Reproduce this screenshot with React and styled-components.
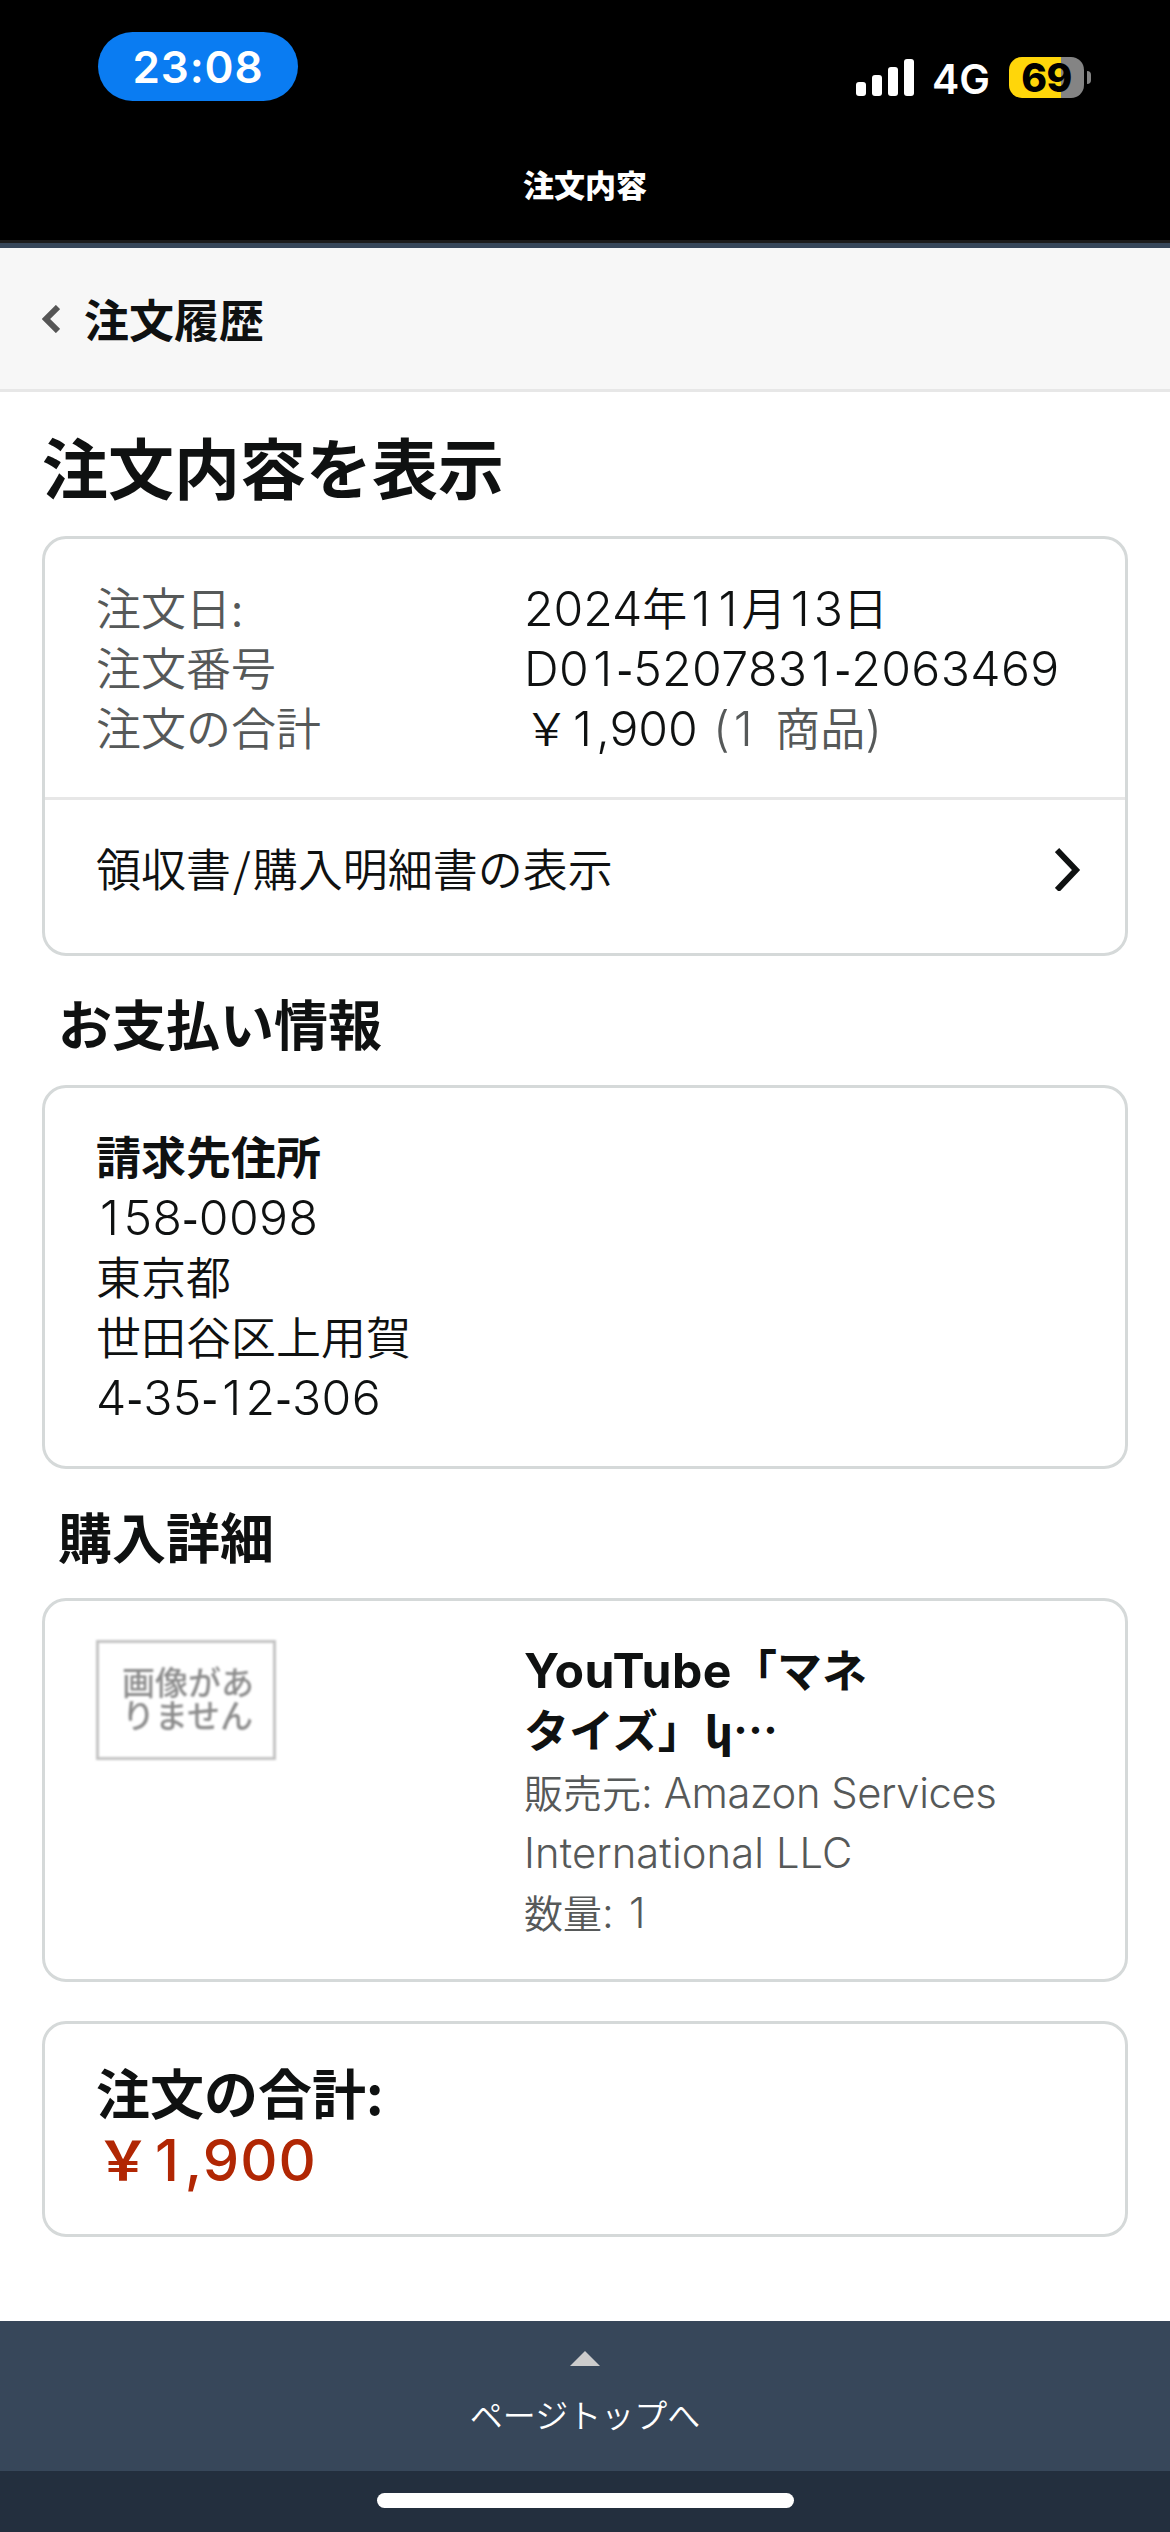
import React from "react";
import styled, { createGlobalStyle } from "styled-components";

const GlobalStyle = createGlobalStyle`
  * {
    box-sizing: border-box;
  }
  body {
    margin: 0;
    background: #fff;
    color: #0f1111;
    font-family: "Noto Sans CJK JP", sans-serif;
    font-size: 45px;
    font-weight: 350;
    line-height: 60px;
    text-size-adjust: none;
  }
`;

const Page = styled.div`
  width: 1170px;
  height: 2532px;
  display: flex;
  flex-direction: column;
  overflow: hidden;
  white-space: nowrap;
`;

const TopArea = styled.header`
  height: 248px;
  flex: none;
  background: #000;
  border-bottom: 5px solid #37475a;
  box-shadow: inset 0 -3px 0 #1c1c1c;
  color: #fff;
`;

const StatusBar = styled.div`
  height: 140px;
  padding: 32px 79px 0 98px;
  display: flex;
  justify-content: space-between;
  font-family: Inter, sans-serif;
`;

const TimePill = styled.div`
  width: 200px;
  height: 69px;
  border-radius: 35px;
  background: #0a7cf2;
  font-size: 44px;
  font-weight: 600;
  line-height: 70px;
  text-align: center;
  letter-spacing: 0.9px;
`;

const StatusIcons = styled.div`
  height: 41px;
  margin-top: 25px;
  display: flex;
  align-items: center;
`;

const Network = styled.span`
  width: 94px;
  margin-top: 3px;
  padding-left: 17px;
  font-size: 41px;
  font-weight: 600;
  line-height: 41px;
`;

const Battery = styled.div`
  width: 75px;
  height: 41px;
  border-radius: 13px;
  background: linear-gradient(90deg, #ffd60a 52px, #848484 52px);
  color: #000;
  font-size: 39px;
  font-weight: 800;
  line-height: 42px;
  text-align: center;
  letter-spacing: -0.5px;
`;

const BatteryTip = styled.div`
  width: 4px;
  height: 13px;
  margin-left: 3px;
  border-radius: 0 4px 4px 0;
  background: #848484;
`;

const ScreenTitle = styled.div`
  height: 90px;
  font-size: 31px;
  font-weight: 900;
  line-height: 87px;
  text-align: center;
`;

const BackBar = styled.nav`
  height: 144px;
  flex: none;
  padding: 1px 42px 0;
  display: flex;
  align-items: center;
  gap: 24px;
  background: #f7f7f7;
  border-bottom: 3px solid #e7e7e7;
  font-weight: 700;
`;

const Content = styled.main`
  flex: 1;
  padding: 0 42px;
`;

const PageTitle = styled.h1`
  margin: 0;
  height: 144px;
  padding-top: 30px;
  font-size: 66px;
  font-weight: 700;
  line-height: 86px;
`;

const SectionTitle = styled.h2`
  margin: 0;
  height: 129px;
  padding: 31px 0 0 16px;
  font-size: 54px;
  font-weight: 700;
  line-height: 72px;
`;

const Card = styled.section`
  height: ${(p) => p.$height}px;
  margin-bottom: ${(p) => p.$gap || 0}px;
  border: 3px solid #d5d9d9;
  border-radius: 24px;
`;

const CardBody = styled.div`
  padding: ${(p) => p.$top}px 51px 40px;
`;

const Columns = styled.div`
  display: grid;
  grid-template-columns: 428px 1fr;
`;

const Muted = styled.span`
  color: #565959;
`;

const ItemCount = styled(Muted)`
  margin-left: 5px;
  word-spacing: 5px;
`;

const LinkRow = styled.a`
  height: 154px;
  padding: 0 44px 16px 51px;
  display: flex;
  align-items: center;
  justify-content: space-between;
  border-top: 3px solid #e7e7e7;
`;

const Slash = styled.span`
  margin: 0 2px;
`;

// digits and latin letters are drawn a little larger than the kana around them
const Latin = styled.span`
  font-family: Inter, sans-serif;
  font-size: 1.07em;
  line-height: 1;
  letter-spacing: ${(p) => p.$track || 0}px;
`;

const Hyphen = styled.span`
  font-family: "Liberation Sans", sans-serif;
`;

const One = styled.span`
  margin: 0 0.085em;
`;

const Bold = styled.div`
  font-weight: 700;
`;

const NoImage = styled.div`
  width: 180px;
  height: 120px;
  padding: 22px 0 0 23px;
  border: 3px solid #c4c4c4;
  color: #8c8c8c;
  font-size: 33px;
  font-weight: 500;
  line-height: 33px;
  filter: blur(0.8px);
`;

const ItemTitle = styled.div`
  margin-top: -1px;
  font-weight: 700;
`;

const Armenian = styled.span`
  margin-left: 2px;
  font-family: "DejaVu Sans", sans-serif;
  font-size: 44px;
  line-height: 1;
`;

const ItemMeta = styled.div`
  padding-top: 2px;
  color: #565959;
  font-size: 39px;
`;

const TotalLabel = styled.div`
  font-size: 54px;
  font-weight: 700;
  line-height: 66px;
`;

const TotalPrice = styled(TotalLabel)`
  color: #b12704;

  ${Latin} {
    font-weight: 550;
  }
`;

const BackToTop = styled.div`
  height: 150px;
  flex: none;
  padding-top: 30px;
  display: flex;
  flex-direction: column;
  align-items: center;
  background: #37475a;
  color: #fff;
  font-size: 33px;
  line-height: 44px;

  svg {
    margin-bottom: 26px;
  }
`;

const HomeArea = styled.footer`
  height: 61px;
  flex: none;
  padding-top: 22px;
  background: #232f3e;
`;

const HomeIndicator = styled.div`
  width: 417px;
  height: 15px;
  margin: 0 auto;
  border-radius: 8px;
  background: #fff;
`;

function SignalIcon() {
  return (
    <svg width="59" height="41" viewBox="0 0 59 41" fill="#fff">
      <rect x="0" y="25" width="10" height="14" rx="3" />
      <rect x="16" y="18" width="10" height="21" rx="3" />
      <rect x="32" y="10" width="10" height="29" rx="3" />
      <rect x="48" y="2" width="10" height="37" rx="3" />
    </svg>
  );
}

function BackIcon() {
  return (
    <svg width="18" height="28" viewBox="0 0 18 28" fill="none" stroke="#555" strokeWidth="6">
      <path d="M16 2 L4 14 L16 26" />
    </svg>
  );
}

function ChevronIcon() {
  return (
    <svg width="26" height="46" viewBox="0 0 26 46" fill="none" stroke="#0f1111" strokeWidth="6">
      <path d="M2 5 L21 25 L2 45" />
    </svg>
  );
}

// "1" and "-" get their own spacing so the figures keep an even pitch
function Digits({ value, track }) {
  return (
    <Latin $track={track}>
      {value.split(/([1-])/).map((part, i) => {
        if (part === "-") return <Hyphen key={i}>-</Hyphen>;
        if (part === "1") return <One key={i}>1</One>;
        return part;
      })}
    </Latin>
  );
}

const orderRows = [
  {
    label: "注文日:",
    value: <><Digits value="2024" />年<Digits value="11" />月<Digits value="13" />日</>,
  },
  { label: "注文番号", value: <Digits value="D01-5207831-2063469" track={0.4} /> },
  {
    label: "注文の合計",
    value: <>￥<Digits value="1,900" /> <ItemCount><Digits value="(1 " />商品<Latin>)</Latin></ItemCount></>,
  },
];

export default function App() {
  return (
    <Page>
      <GlobalStyle />
      <TopArea>
        <StatusBar>
          <TimePill>23:08</TimePill>
          <StatusIcons>
            <SignalIcon />
            <Network>4G</Network>
            <Battery>69</Battery>
            <BatteryTip />
          </StatusIcons>
        </StatusBar>
        <ScreenTitle>注文内容</ScreenTitle>
      </TopArea>

      <BackBar>
        <BackIcon />
        <span>注文履歴</span>
      </BackBar>

      <Content>
        <PageTitle>注文内容を表示</PageTitle>
        <Card $height={420}>
          <CardBody $top={38}>
            {orderRows.map((row) => (
              <Columns key={row.label}>
                <Muted>{row.label}</Muted>
                <div>{row.value}</div>
              </Columns>
            ))}
          </CardBody>
          <LinkRow>
            <span>領収書<Slash>/</Slash>購入明細書の表示</span>
            <ChevronIcon />
          </LinkRow>
        </Card>

        <SectionTitle>お支払い情報</SectionTitle>
        <Card $height={384}>
          <CardBody $top={38}>
            <Bold>請求先住所</Bold>
            <div><Digits value="158-0098" track={0.4} /></div>
            <div>東京都</div>
            <div>世田谷区上用賀</div>
            <div><Digits value="4-35-12-306" track={0.4} /></div>
          </CardBody>
        </Card>

        <SectionTitle>購入詳細</SectionTitle>
        <Card $height={384} $gap={39}>
          <CardBody $top={39}>
            <Columns>
              <NoImage>
                画像があ
                <br />
                りません
              </NoImage>
              <div>
                <ItemTitle>
                  <Latin $track={0.5}>YouTube</Latin>「マネ
                  <br />
                  タイズ」<Armenian>կ</Armenian>…
                </ItemTitle>
                <ItemMeta>
                  販売元<Latin $track={-0.4}>: Amazon Services</Latin>
                  <br />
                  <Latin $track={0.1}>International LLC</Latin>
                  <br />
                  数量<Digits value=": 1" />
                </ItemMeta>
              </div>
            </Columns>
          </CardBody>
        </Card>

        <Card $height={216}>
          <CardBody $top={35}>
            <TotalLabel>注文の合計:</TotalLabel>
            <TotalPrice>￥<Digits value="1,900" track={1} /></TotalPrice>
          </CardBody>
        </Card>
      </Content>

      <BackToTop>
        <svg width="30" height="15" viewBox="0 0 30 15" fill="#ccc">
          <path d="M15 0 L30 15 H0 Z" />
        </svg>
        <span>ページトップへ</span>
      </BackToTop>
      <HomeArea>
        <HomeIndicator />
      </HomeArea>
    </Page>
  );
}
